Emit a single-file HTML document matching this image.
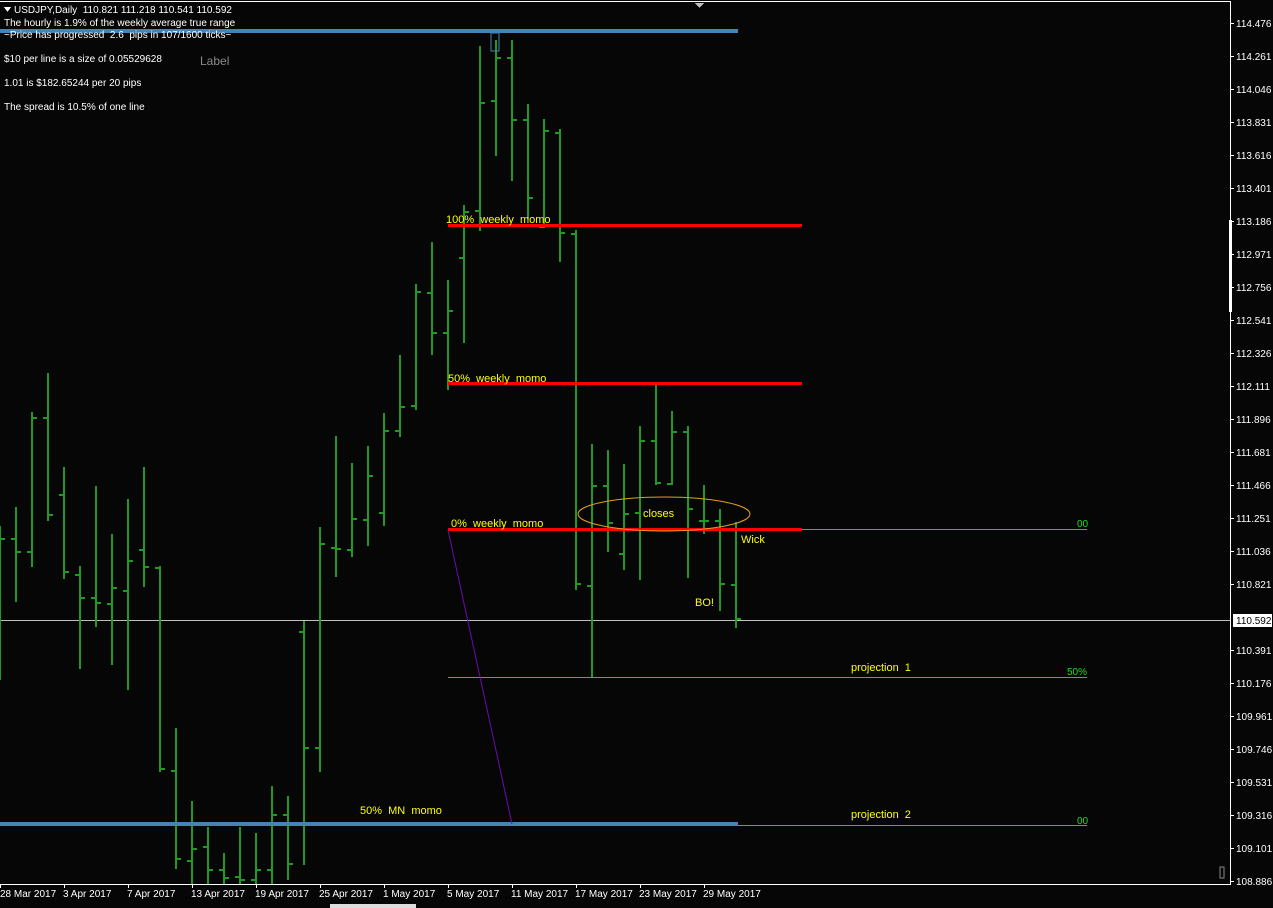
<!DOCTYPE html>
<html><head><meta charset="utf-8"><style>
html,body{margin:0;padding:0;background:#060606;width:1273px;height:908px;overflow:hidden}
svg{display:block}
text{font-family:"Liberation Sans",sans-serif;white-space:pre}
</style></head><body>
<svg width="1273" height="908" viewBox="0 0 1273 908" xmlns="http://www.w3.org/2000/svg" shape-rendering="crispEdges" xml:space="preserve">
<rect width="1273" height="908" fill="#060606"/>
<line x1="0" y1="1.5" x2="1231" y2="1.5" stroke="#fff"/>
<line x1="1230.5" y1="1" x2="1230.5" y2="885" stroke="#fff"/>
<rect x="1229" y="220" width="3" height="92" fill="#fff"/>
<line x1="0" y1="884.5" x2="1231" y2="884.5" stroke="#fff"/>
<polygon points="695,3 704,3 699.5,8" fill="#c0c0c0"/>
<rect x="330" y="904" width="86" height="4" fill="#ddd"/>
<rect x="1220" y="867" width="4" height="11" fill="none" stroke="#888"/>
<line x1="0" y1="620.5" x2="1230" y2="620.5" stroke="#c0c0c0"/>
<line x1="738" y1="529.5" x2="1087" y2="529.5" stroke="#22cc22"/>
<line x1="448" y1="677.5" x2="1087" y2="677.5" stroke="#22cc22"/>
<line x1="738" y1="825.5" x2="1087" y2="825.5" stroke="#22cc22"/>
<path stroke="#229922" stroke-width="2" fill="none" d="
M0 526V680M0 539H5
M16 507V602M11 539H16M16 552H21
M32 412V567M27 552H32M32 418H37
M48 373V521M43 418H48M48 515H53
M64 467V579M59 495H64M64 572H69
M80 566V669M75 575H80M80 598H85
M96 486V627M91 598H96M96 603H101
M112 534V665M107 604H112M112 588H117
M128 499V690M123 591H128M128 561H133
M144 467V587M139 550H144M144 567H149
M160 566V772M155 568H160M160 769H165
M176 728V869M171 771H176M176 859H181
M192 801V884M187 861H192M192 849H197
M208 827V884M203 847H208M208 870H213
M224 853V884M219 870H224M224 878H229
M240 827V884M235 877H240M240 880H245
M256 833V884M251 880H256M256 870H261
M272 786V884M267 870H272M272 815H277
M288 796V880M283 815H288M288 864H293
M304 621V865M299 632H304M304 748H309
M320 527V772M315 748H320M320 544H325
M336 436V577M331 548H336M336 549H341
M352 463V557M347 550H352M352 519H357
M368 446V546M363 520H368M368 476H373
M384 413V526M379 513H384M384 431H389
M400 355V437M395 431H400M400 407H405
M416 284V410M411 406H416M416 292H421
M432 242V355M427 293H432M432 333H437
M448 280V390M443 333H448M448 311H453
M464 205V343M459 258H464M464 212H469
M480 46V231M475 211H480M480 103H485
M496 40V156M491 101H496M496 58H501
M512 40V181M507 58H512M512 120H517
M528 104V219M523 120H528M528 198H533
M544 119V228M539 227H544M544 131H549
M560 129V262M555 133H560M560 233H565
M576 230V590M571 234H576M576 584H581
M592 444V677M587 586H592M592 486H597
M608 450V552M603 486H608M608 523H613
M624 464V570M619 554H624M624 514H629
M640 426V580M635 513H640M640 441H645
M656 385V485M651 441H656M656 483H661
M672 411V485M667 484H672M672 432H677
M688 426V578M683 432H688M688 509H693
M704 485V534M699 521H704M704 521H709
M720 509V611M715 521H720M720 584H725
M736 522V628M731 585H736M736 619H741"/>
<rect x="491" y="33" width="8" height="18" fill="none" stroke="#4682b4"/>
<rect x="0" y="29" width="738" height="4" fill="#4682b4"/>
<rect x="0" y="822" width="738" height="4" fill="#4682b4"/>
<rect x="448" y="224" width="354" height="3" fill="#ff0000"/>
<rect x="448" y="382" width="354" height="3" fill="#ff0000"/>
<rect x="448" y="528" width="354" height="3" fill="#ff0000"/>
<line x1="448" y1="530" x2="512" y2="824" stroke="#6a0dad" shape-rendering="auto"/>
<ellipse cx="664" cy="514" rx="86" ry="17" fill="none" stroke="#e0a020" shape-rendering="auto"/>
<g fill="#ffff00" font-size="11">
<text x="446" y="223">100%  weekly  momo</text>
<text x="448" y="382">50%  weekly  momo</text>
<text x="451" y="527">0%  weekly  momo</text>
<text x="643" y="517">closes</text>
<text x="741" y="543">Wick</text>
<text x="695" y="606">BO!</text>
<text x="851" y="671">projection  1</text>
<text x="851" y="818">projection  2</text>
<text x="360" y="814">50%  MN  momo</text>
</g>
<g fill="#22dd22" font-size="10">
<text x="1077" y="527">00</text>
<text x="1067" y="675">50%</text>
<text x="1077" y="824">00</text>
</g>
<g fill="#ffffff" font-size="10">
<polygon points="4,7 11,7 7.5,12" fill="#fff"/>
<text x="14" y="13">USDJPY,Daily  110.821 111.218 110.541 110.592</text>
<text x="4" y="26">The hourly is 1.9% of the weekly average true range</text>
<text x="4" y="38">~Price has progressed  2.6  pips in 107/1600 ticks~</text>
<text x="4" y="62">$10 per line is a size of 0.05529628</text>
<text x="4" y="86">1.01 is $182.65244 per 20 pips</text>
<text x="4" y="110">The spread is 10.5% of one line</text>
</g>
<text x="200" y="65" fill="#8a8a8a" font-size="12">Label</text>
<g fill="#ffffff" font-size="10">
<text x="1236" y="27">114.476</text><text x="1236" y="60">114.261</text><text x="1236" y="93">114.046</text>
<text x="1236" y="126">113.831</text><text x="1236" y="159">113.616</text><text x="1236" y="192">113.401</text>
<text x="1236" y="225">113.186</text><text x="1236" y="258">112.971</text><text x="1236" y="291">112.756</text>
<text x="1236" y="324">112.541</text><text x="1236" y="357">112.326</text><text x="1236" y="390">112.111</text>
<text x="1236" y="423">111.896</text><text x="1236" y="456">111.681</text><text x="1236" y="489">111.466</text>
<text x="1236" y="522">111.251</text><text x="1236" y="555">111.036</text><text x="1236" y="588">110.821</text>
<text x="1236" y="654">110.391</text><text x="1236" y="687">110.176</text><text x="1236" y="720">109.961</text>
<text x="1236" y="753">109.746</text><text x="1236" y="786">109.531</text><text x="1236" y="819">109.316</text>
<text x="1236" y="852">109.101</text><text x="1236" y="885">108.886</text>
</g>
<path stroke="#fff" d="M1231 23.5h3M1231 56.5h3M1231 89.5h3M1231 122.5h3M1231 155.5h3M1231 188.5h3M1231 221.5h3M1231 254.5h3M1231 287.5h3M1231 320.5h3M1231 353.5h3M1231 386.5h3M1231 419.5h3M1231 452.5h3M1231 485.5h3M1231 518.5h3M1231 551.5h3M1231 584.5h3M1231 650.5h3M1231 683.5h3M1231 716.5h3M1231 749.5h3M1231 782.5h3M1231 815.5h3M1231 848.5h3M1231 881.5h3"/>
<rect x="1233" y="614" width="39" height="13" fill="#fff"/>
<text x="1236" y="624" fill="#000" font-size="10">110.592</text>
<path stroke="#fff" d="M0.5 885v3M64.5 885v3M128.5 885v3M192.5 885v3M256.5 885v3M320.5 885v3M384.5 885v3M448.5 885v3M512.5 885v3M576.5 885v3M640.5 885v3M704.5 885v3"/>
<g fill="#ffffff" font-size="10">
<text x="0" y="897">28 Mar 2017</text><text x="63" y="897">3 Apr 2017</text><text x="127" y="897">7 Apr 2017</text>
<text x="191" y="897">13 Apr 2017</text><text x="255" y="897">19 Apr 2017</text><text x="319" y="897">25 Apr 2017</text>
<text x="383" y="897">1 May 2017</text><text x="447" y="897">5 May 2017</text><text x="511" y="897">11 May 2017</text>
<text x="575" y="897">17 May 2017</text><text x="639" y="897">23 May 2017</text><text x="703" y="897">29 May 2017</text>
</g>
</svg>
</body></html>
